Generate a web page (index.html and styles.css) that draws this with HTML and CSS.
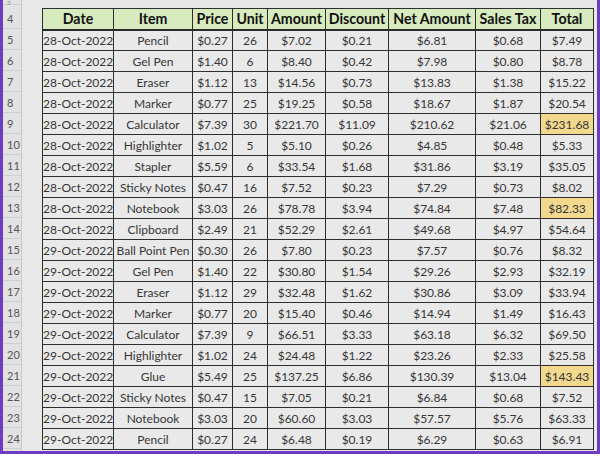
FILE: index.html
```html
<!DOCTYPE html>
<html>
<head>
<meta charset="utf-8">
<link rel="stylesheet" href="styles.css">
</head>
<body>
<div class="frame">
  <div class="rowheads">
    <div class="rh rh-top"><span>3</span></div>
    <div class="rh rh-hdr">4</div>
    <div class="rh">5</div><div class="rh">6</div><div class="rh">7</div><div class="rh">8</div>
    <div class="rh">9</div><div class="rh">10</div><div class="rh">11</div><div class="rh">12</div>
    <div class="rh">13</div><div class="rh">14</div><div class="rh">15</div><div class="rh">16</div>
    <div class="rh">17</div><div class="rh">18</div><div class="rh">19</div><div class="rh">20</div>
    <div class="rh">21</div><div class="rh">22</div><div class="rh">23</div><div class="rh">24</div>
  </div>
  <div class="colA"></div>
  <div class="main">
    <table class="data">
      <colgroup>
        <col class="c-date"><col class="c-item"><col class="c-price"><col class="c-unit"><col class="c-amt">
        <col class="c-disc"><col class="c-net"><col class="c-tax"><col class="c-total">
      </colgroup>
      <thead>
        <tr><th>Date</th><th>Item</th><th>Price</th><th>Unit</th><th>Amount</th><th>Discount</th><th>Net Amount</th><th>Sales Tax</th><th>Total</th></tr>
      </thead>
      <tbody>
        <tr><td>28-Oct-2022</td><td>Pencil</td><td>$0.27</td><td>26</td><td>$7.02</td><td>$0.21</td><td>$6.81</td><td>$0.68</td><td>$7.49</td></tr>
        <tr><td>28-Oct-2022</td><td>Gel Pen</td><td>$1.40</td><td>6</td><td>$8.40</td><td>$0.42</td><td>$7.98</td><td>$0.80</td><td>$8.78</td></tr>
        <tr><td>28-Oct-2022</td><td>Eraser</td><td>$1.12</td><td>13</td><td>$14.56</td><td>$0.73</td><td>$13.83</td><td>$1.38</td><td>$15.22</td></tr>
        <tr><td>28-Oct-2022</td><td>Marker</td><td>$0.77</td><td>25</td><td>$19.25</td><td>$0.58</td><td>$18.67</td><td>$1.87</td><td>$20.54</td></tr>
        <tr><td>28-Oct-2022</td><td>Calculator</td><td>$7.39</td><td>30</td><td>$221.70</td><td>$11.09</td><td>$210.62</td><td>$21.06</td><td class="hl">$231.68</td></tr>
        <tr><td>28-Oct-2022</td><td>Highlighter</td><td>$1.02</td><td>5</td><td>$5.10</td><td>$0.26</td><td>$4.85</td><td>$0.48</td><td>$5.33</td></tr>
        <tr><td>28-Oct-2022</td><td>Stapler</td><td>$5.59</td><td>6</td><td>$33.54</td><td>$1.68</td><td>$31.86</td><td>$3.19</td><td>$35.05</td></tr>
        <tr><td>28-Oct-2022</td><td>Sticky Notes</td><td>$0.47</td><td>16</td><td>$7.52</td><td>$0.23</td><td>$7.29</td><td>$0.73</td><td>$8.02</td></tr>
        <tr><td>28-Oct-2022</td><td>Notebook</td><td>$3.03</td><td>26</td><td>$78.78</td><td>$3.94</td><td>$74.84</td><td>$7.48</td><td class="hl">$82.33</td></tr>
        <tr><td>28-Oct-2022</td><td>Clipboard</td><td>$2.49</td><td>21</td><td>$52.29</td><td>$2.61</td><td>$49.68</td><td>$4.97</td><td>$54.64</td></tr>
        <tr><td>29-Oct-2022</td><td>Ball Point Pen</td><td>$0.30</td><td>26</td><td>$7.80</td><td>$0.23</td><td>$7.57</td><td>$0.76</td><td>$8.32</td></tr>
        <tr><td>29-Oct-2022</td><td>Gel Pen</td><td>$1.40</td><td>22</td><td>$30.80</td><td>$1.54</td><td>$29.26</td><td>$2.93</td><td>$32.19</td></tr>
        <tr><td>29-Oct-2022</td><td>Eraser</td><td>$1.12</td><td>29</td><td>$32.48</td><td>$1.62</td><td>$30.86</td><td>$3.09</td><td>$33.94</td></tr>
        <tr><td>29-Oct-2022</td><td>Marker</td><td>$0.77</td><td>20</td><td>$15.40</td><td>$0.46</td><td>$14.94</td><td>$1.49</td><td>$16.43</td></tr>
        <tr><td>29-Oct-2022</td><td>Calculator</td><td>$7.39</td><td>9</td><td>$66.51</td><td>$3.33</td><td>$63.18</td><td>$6.32</td><td>$69.50</td></tr>
        <tr><td>29-Oct-2022</td><td>Highlighter</td><td>$1.02</td><td>24</td><td>$24.48</td><td>$1.22</td><td>$23.26</td><td>$2.33</td><td>$25.58</td></tr>
        <tr><td>29-Oct-2022</td><td>Glue</td><td>$5.49</td><td>25</td><td>$137.25</td><td>$6.86</td><td>$130.39</td><td>$13.04</td><td class="hl">$143.43</td></tr>
        <tr><td>29-Oct-2022</td><td>Sticky Notes</td><td>$0.47</td><td>15</td><td>$7.05</td><td>$0.21</td><td>$6.84</td><td>$0.68</td><td>$7.52</td></tr>
        <tr><td>29-Oct-2022</td><td>Notebook</td><td>$3.03</td><td>20</td><td>$60.60</td><td>$3.03</td><td>$57.57</td><td>$5.76</td><td>$63.33</td></tr>
        <tr><td>29-Oct-2022</td><td>Pencil</td><td>$0.27</td><td>24</td><td>$6.48</td><td>$0.19</td><td>$6.29</td><td>$0.63</td><td>$6.91</td></tr>
      </tbody>
    </table>
  </div>
  <div class="colR"></div>
</div>
</body>
</html>
```
FILE: styles.css
```css
html, body {
  margin: 0;
  padding: 0;
  background: #ffffff;
}
body {
  font-family: Lato, "Liberation Sans", sans-serif;
  width: 600px;
  height: 467px;
  overflow: hidden;
}
.frame {
  display: flex;
  width: 600px;
  height: 454px;
  box-sizing: border-box;
  border-left: 3px solid #6e3cc2;
  border-right: 3px solid #6e3cc2;
  border-bottom: 3px solid #6e3cc2;
  background: #e7e7e7;
  overflow: hidden;
}
.rowheads {
  width: 18px;
  display: flex;
  flex-direction: column;
  background: #e2e2e2;
  border-right: 1px solid #c9c9c9;
  flex: none;
}
.rh {
  height: 21px;
  box-sizing: border-box;
  border-bottom: 1px solid #cfcfcf;
  font-size: 11px;
  color: #555;
  line-height: 21px;
  padding-left: 4px;
  flex: none;
}
.rh-top {
  height: 5px;
  font-size: 6px;
  line-height: 5px;
  color: #888;
}
.rh-hdr {
  height: 24px;
  line-height: 27px;
}
.colA {
  width: 20px;
  flex: none;
  background: #e8e8e8;
}
.main {
  padding-top: 8px;
  flex: none;
}
.colR {
  flex: 1;
  background: #e8e8e8;
}
table.data {
  border-collapse: collapse;
  table-layout: fixed;
  width: 551px;
}
.c-date { width: 71px; }
.c-item { width: 79px; }
.c-price { width: 40px; }
.c-unit { width: 35px; }
.c-amt { width: 58px; }
.c-disc { width: 63px; }
.c-net { width: 87px; }
.c-tax { width: 65px; }
.c-total { width: 53px; }
th, td {
  border: 1px solid #2e2e2e;
  padding: 0;
  text-align: center;
  white-space: nowrap;
  overflow: hidden;
  box-sizing: border-box;
}
th {
  background: #d8ebbf;
  color: #111;
  font-weight: 700;
  font-size: 14.2px;
  height: 21px;
  border-bottom: 2px solid #2a2a2a;
}
td {
  background: #e9e9e9;
  color: #363636;
  height: 21px;
  font-size: 12px;
}
td.hl {
  background: #f2d98e;
}
```
